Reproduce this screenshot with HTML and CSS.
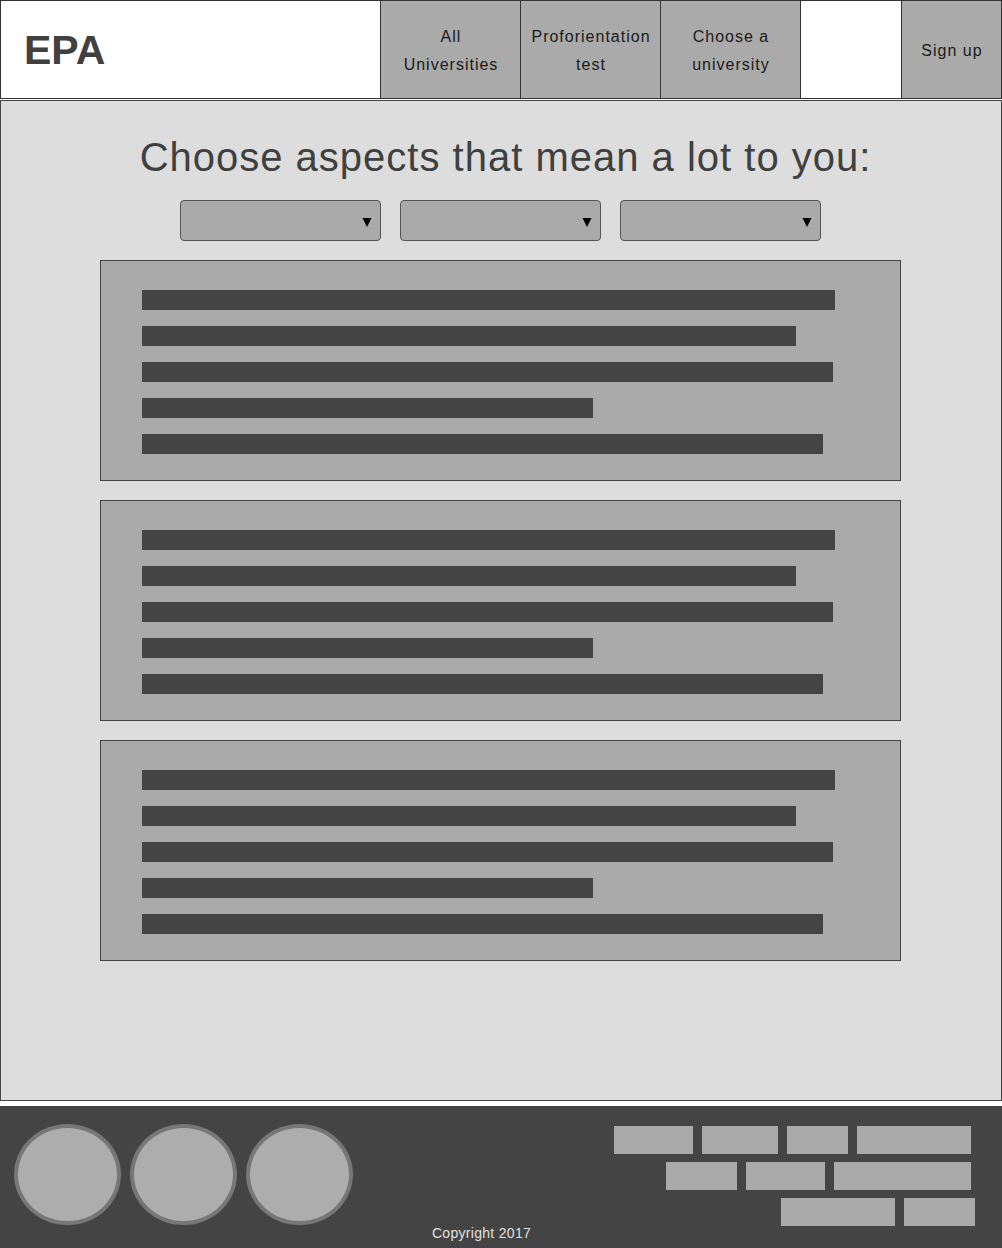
FILE: index.html
```html
<!DOCTYPE html>
<html lang="en">
<head>
<meta charset="utf-8">
<title>EPA</title>
<link rel="stylesheet" href="styles.css">
</head>
<body>
<header class="header">
  <div class="logo">EPA</div>
  <nav class="nav">
    <a class="nav-item">All<br>Universities</a>
    <a class="nav-item">Proforientation<br>test</a>
    <a class="nav-item nav-item-last">Choose a<br>university</a>
  </nav>
  <div class="spacer"></div>
  <a class="nav-item signup">Sign up</a>
</header>

<main class="main">
  <h1 class="title">Choose aspects that mean a lot to you:</h1>
  <div class="selects">
    <div class="select"><svg class="arrow" width="10" height="9" viewBox="0 0 10 9"><polygon points="0.5,0 9.5,0 5,9" fill="#000"/></svg></div>
    <div class="select"><svg class="arrow" width="10" height="9" viewBox="0 0 10 9"><polygon points="0.5,0 9.5,0 5,9" fill="#000"/></svg></div>
    <div class="select"><svg class="arrow" width="10" height="9" viewBox="0 0 10 9"><polygon points="0.5,0 9.5,0 5,9" fill="#000"/></svg></div>
  </div>
  <section class="cards">
    <article class="card">
      <div class="bar" style="width:693px"></div>
      <div class="bar" style="width:654px"></div>
      <div class="bar" style="width:691px"></div>
      <div class="bar" style="width:451px"></div>
      <div class="bar" style="width:681px"></div>
    </article>
    <article class="card">
      <div class="bar" style="width:693px"></div>
      <div class="bar" style="width:654px"></div>
      <div class="bar" style="width:691px"></div>
      <div class="bar" style="width:451px"></div>
      <div class="bar" style="width:681px"></div>
    </article>
    <article class="card">
      <div class="bar" style="width:693px"></div>
      <div class="bar" style="width:654px"></div>
      <div class="bar" style="width:691px"></div>
      <div class="bar" style="width:451px"></div>
      <div class="bar" style="width:681px"></div>
    </article>
  </section>
</main>

<footer class="footer">
  <div class="footer-top">
    <div class="circles">
      <div class="circle"></div>
      <div class="circle"></div>
      <div class="circle"></div>
    </div>
    <div class="links">
      <div class="link-row">
        <span class="link" style="width:79px"></span>
        <span class="link" style="width:76px"></span>
        <span class="link" style="width:61px"></span>
        <span class="link" style="width:114px"></span>
      </div>
      <div class="link-row">
        <span class="link" style="width:71px"></span>
        <span class="link" style="width:79px"></span>
        <span class="link" style="width:137px"></span>
      </div>
      <div class="link-row link-row-last">
        <span class="link" style="width:114px"></span>
        <span class="link" style="width:71px"></span>
      </div>
    </div>
  </div>
  <div class="copyright">Copyright 2017</div>
</footer>
</body>
</html>
```

FILE: styles.css
```css
* {
  box-sizing: border-box;
}

html, body {
  margin: 0;
  padding: 0;
  background: #ffffff;
}

body {
  width: 1002px;
  font-family: "Liberation Sans", Arial, sans-serif;
  color: #444444;
}

/* Header */
.header {
  display: flex;
  height: 99px;
  border: 1px solid #333333;
  background: #ffffff;
}

.logo {
  width: 379px;
  padding-left: 23px;
  padding-top: 2px;
  display: flex;
  align-items: center;
  font-size: 41px;
  line-height: 41px;
  font-weight: bold;
  color: #404040;
}

.nav {
  display: flex;
}

.nav-item {
  width: 140px;
  display: flex;
  align-items: center;
  justify-content: center;
  text-align: center;
  background: #aaaaaa;
  border-left: 1px solid #333333;
  font-size: 16px;
  letter-spacing: 1px;
  line-height: 28px;
  color: #1a1a1a;
  padding-top: 3px;
  padding-left: 1px;
}

.nav-item-last {
  width: 141px;
  border-right: 1px solid #333333;
}

.spacer {
  width: 100px;
}

.signup {
  width: 100px;
  padding-top: 2px;
}

/* Main */
.main {
  margin-top: 1px;
  height: 1001px;
  border: 1px solid #444444;
  background: #dddddd;
  padding-top: 36px;
}

.title {
  margin: 0;
  padding-left: 9px;
  text-align: center;
  font-weight: normal;
  font-size: 40px;
  line-height: 40px;
  letter-spacing: 1px;
  color: #404040;
}

.selects {
  margin-top: 23px;
  padding-right: 1px;
  display: flex;
  justify-content: center;
  gap: 19px;
}

.select {
  width: 201px;
  height: 41px;
  background: #aaaaaa;
  border: 1px solid #555555;
  border-radius: 4px;
  display: flex;
  align-items: center;
  justify-content: flex-end;
  padding-right: 8px;
  padding-top: 3px;
}

.arrow {
  display: block;
}

.cards {
  margin-top: 19px;
  padding-right: 1px;
  display: flex;
  flex-direction: column;
  align-items: center;
  gap: 19px;
}

.card {
  width: 801px;
  height: 221px;
  background: #aaaaaa;
  border: 1px solid #444444;
  padding: 29px 0 26px 41px;
  display: flex;
  flex-direction: column;
  gap: 16px;
}

.bar {
  height: 20px;
  background: #444444;
}

/* Footer */
.footer {
  margin-top: 5px;
  height: 142px;
  background: #444444;
  padding-top: 18px;
}

.footer-top {
  display: flex;
  justify-content: space-between;
  height: 101px;
}

.circles {
  display: flex;
  gap: 9px;
  padding-left: 14px;
}

.circle {
  width: 107px;
  height: 101px;
  border-radius: 50%;
  background: #adadad;
  border: 4px solid #777777;
}

.links {
  display: flex;
  flex-direction: column;
  align-items: flex-end;
  gap: 8px;
  margin-top: 2px;
  padding-right: 31px;
}

.link-row {
  display: flex;
  gap: 9px;
}

.link-row-last {
  margin-right: -4px;
}

.link {
  display: block;
  height: 28px;
  background: #aaaaaa;
}

.copyright {
  text-align: center;
  padding-right: 39px;
  font-size: 14px;
  line-height: 16px;
  letter-spacing: 0.3px;
  color: #e0e0e0;
}
```
